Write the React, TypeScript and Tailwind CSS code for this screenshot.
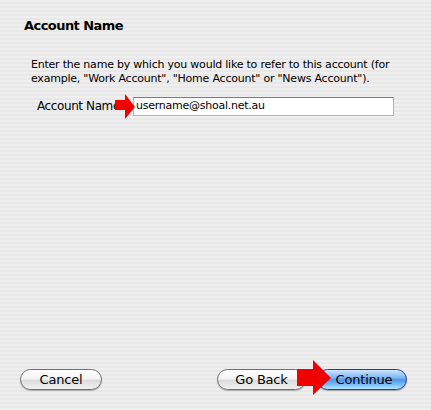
import React from "react";

function Arrow({ className, points, w, h }: { className: string; points: string; w: number; h: number }) {
  return (
    <svg className={className} width={w} height={h} viewBox={`0 0 ${w} ${h}`}>
      <polygon points={points} fill="#f00000" />
    </svg>
  );
}

export default function App() {
  return (
    <div className="relative w-[431px] h-[410px] flex flex-col overflow-hidden text-black font-['DejaVu_Sans',sans-serif] bg-[repeating-linear-gradient(to_bottom,#efefef_0px,#efefef_2px,#e8e8e8_2px,#e8e8e8_4px)]">
      <div className="pl-[24px] pt-[18px] text-[13px] leading-[16px] font-bold tracking-[-0.55px]">Account Name</div>
      <p className="ml-[31px] mt-[24px] w-[390px] text-[11px] leading-[14px] tracking-[-0.22px]">
        Enter the name by which you would like to refer to this account (for example, "Work Account", "Home Account" or "News Account").
      </p>
      <div className="flex items-center mt-[11px]">
        <span className="ml-[37px] w-[96px] text-[12px] leading-[19px] tracking-[-0.4px]">Account Name</span>
        <div className="w-[261px] h-[19px] bg-white border border-[#b4b4b4] border-t-[#7c7c7c] flex items-center pl-[2px] text-[11px] tracking-[-0.25px]">
          username@shoal.net.au
        </div>
      </div>
      <div className="mt-auto mb-[20px] flex items-center justify-between pl-[20px] pr-[24px]">
        <button className="w-[82px] h-[21px] rounded-full border border-[#6e6e6e] text-[13px] leading-[19px] tracking-[-0.2px] bg-[linear-gradient(to_bottom,#ffffff_0%,#f4f4f4_45%,#dcdcdc_55%,#f0f0f0_100%)] shadow-[0_1px_1px_rgba(0,0,0,0.25)]">
          Cancel
        </button>
        <div className="flex items-center gap-[11px]">
          <button className="w-[89px] h-[21px] rounded-full border border-[#6e6e6e] text-[13px] leading-[19px] tracking-[-0.2px] bg-[linear-gradient(to_bottom,#ffffff_0%,#f4f4f4_45%,#dcdcdc_55%,#f0f0f0_100%)] shadow-[0_1px_1px_rgba(0,0,0,0.25)]">
            Go Back
          </button>
          <button className="w-[90px] h-[21px] rounded-full border border-[#1f3f8f] text-[13px] leading-[19px] tracking-[-0.2px] bg-[linear-gradient(to_bottom,#cfe6ff_0%,#7fb6f4_40%,#4f95ea_52%,#7fc4fb_80%,#b8e6ff_100%)] shadow-[0_1px_1px_rgba(0,0,0,0.3)]">
            <span className="pl-[4px]">Continue</span>
          </button>
        </div>
      </div>
      <Arrow className="absolute left-[114px] top-[94px]" w={22} h={26} points="1,6 11,6 11,0 21,13 11,25 11,16 1,16" />
      <Arrow className="absolute left-[296px] top-[359px]" w={36} h={37} points="1,10 17,10 17,1 35,19 17,36 17,27 1,27" />
    </div>
  );
}
